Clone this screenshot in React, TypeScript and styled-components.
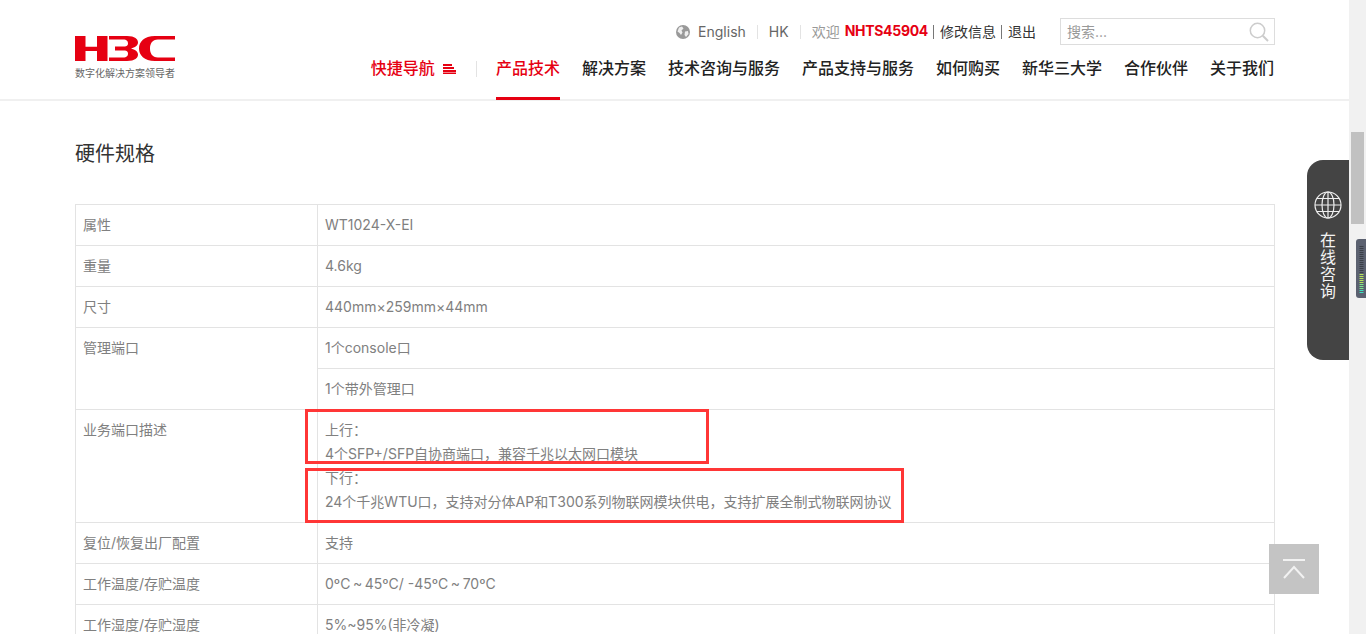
import React from "react";
import styled, { createGlobalStyle } from "styled-components";

const Global = createGlobalStyle`
  html, body { margin: 0; padding: 0; height: 100%; overflow: hidden; background: #fff; }
  body { font-family: "Inter", "Noto Sans CJK SC", sans-serif; }
`;

const Page = styled.div`
  position: relative;
  display: flex;
  width: 1366px;
  height: 634px;
  overflow: hidden;
`;
const Main = styled.div`
  flex: 1;
  min-width: 0;
  display: flex;
  flex-direction: column;
`;
const ScrollTrack = styled.div`
  width: 17px;
  flex: none;
  background: #f1f1f1;
  padding: 132px 2px 0;
  box-sizing: border-box;
`;
const ScrollThumb = styled.div`
  height: 92px;
  background: #c1c1c1;
`;
const Header = styled.header`
  height: 101px;
  flex: none;
  box-sizing: border-box;
  border-bottom: 2px solid #f0f0f0;
  padding: 0 74px 0 75px;
  display: flex;
  justify-content: space-between;
`;
const Brand = styled.div`
  display: flex;
  flex-direction: column;
  padding-top: 36px;
  width: 100px;
`;
const Tagline = styled.div`
  font-size: 10px;
  line-height: 14px;
  margin-top: 5px;
  color: #666;
  white-space: nowrap;
`;
const HeaderRight = styled.div`
  display: flex;
  flex-direction: column;
  align-items: flex-end;
`;
const TopBar = styled.div`
  display: flex;
  align-items: center;
  height: 27px;
  margin-top: 18px;
  font-size: 14px;
  color: #555;
`;
const TopLink = styled.span`
  white-space: nowrap;
  color: #333;
  position: relative;
  top: -1px;
`;
const Lang = styled.span`
  display: flex;
  align-items: center;
  gap: 8px;
  color: #666;
  padding-right: 11px;
  border-right: 1px solid #e3e3e3;
  line-height: 14px;
  white-space: nowrap;
`;
const Region = styled(Lang)`
  padding-left: 11px;
`;
const Welcome = styled.span`
  color: #999;
  margin-left: 11px;
  position: relative;
  top: -1px;
`;
const UserName = styled.b`
  color: #e60012;
  margin-left: 5px;
  font-weight: 700;
  letter-spacing: -0.3px;
  position: relative;
  top: -1px;
`;
const Sep = styled.span`
  width: 1px;
  height: 14px;
  background: #777;
  margin: 0 6px 0 5px;
`;
const Search = styled.div`
  width: 215px;
  height: 27px;
  box-sizing: border-box;
  margin-left: 24px;
  border: 1px solid #ddd;
  display: flex;
  align-items: center;
  justify-content: space-between;
  padding: 0 5px 2px 6px;
  font-size: 14px;
  color: #999;
`;
const SearchGlyph = styled.svg`
  margin-bottom: -2px;
`;
const Nav = styled.nav`
  display: flex;
  height: 54px;
  margin: 1px 1px 0 0;
  font-size: 16px;
  font-weight: 500;
  color: #222;
`;
const NavItem = styled.div<{ $active?: boolean; $quick?: boolean; $first?: boolean }>`
  box-sizing: border-box;
  height: 54px;
  line-height: 44px;
  margin-left: ${(p) => (p.$quick ? 0 : p.$first ? 19 : 22)}px;
  white-space: nowrap;
  color: ${(p) => (p.$active || p.$quick ? "#e60012" : "#222")};
  border-bottom: 3px solid ${(p) => (p.$active ? "#e60012" : "transparent")};
  display: flex;
  align-items: flex-start;
`;
const QuickIcon = styled.svg`
  margin: 18px 20px 0 8px;
  flex: none;
`;
const NavDivider = styled.span`
  width: 1px;
  height: 16px;
  margin: 15px 0 0 0;
  background: #e3e3e3;
`;
const Content = styled.main`
  position: relative;
  flex: 1;
  min-height: 0;
  padding: 0 74px 0 75px;
`;
const Title = styled.h2`
  margin: 0;
  padding-top: 37px;
  height: 66px;
  font-size: 20px;
  line-height: 32px;
  font-weight: 400;
  color: #333;
`;
const Table = styled.table`
  width: 1200px;
  border-collapse: collapse;
  table-layout: fixed;
  font-size: 14px;
  color: #808080;
`;
const Cell = styled.td`
  border: 1px solid #e3e3e3;
  padding: 8px 7px;
  line-height: 24px;
  height: 24px;
  vertical-align: top;
`;
const NameCol = styled.col`
  width: 242px;
`;
const Annotation = styled.div<{ $top: number; $w: number; $h: number }>`
  position: absolute;
  left: 305px;
  top: ${(p) => p.$top}px;
  width: ${(p) => p.$w}px;
  height: ${(p) => p.$h}px;
  box-sizing: border-box;
  border: 3px solid #ff3636;
`;
const ChatTab = styled.div`
  position: absolute;
  left: 1307px;
  top: 160px;
  width: 42px;
  height: 200px;
  box-sizing: border-box;
  padding-top: 31px;
  background: #444;
  border-radius: 16px 0 0 16px;
  display: flex;
  flex-direction: column;
  align-items: center;
  color: #f2f2f2;
`;
const ChatText = styled.div`
  width: 16px;
  margin-top: 13px;
  font-size: 16px;
  line-height: 17px;
  text-align: center;
`;
const BackTop = styled.div`
  position: absolute;
  left: 1269px;
  top: 544px;
  width: 50px;
  height: 50px;
  background: #c4c4c4;
  display: flex;
  align-items: center;
  justify-content: center;
`;
const Meter = styled.svg`
  position: absolute;
  left: 1356px;
  top: 239px;
`;

const Logo = () => (
  <svg width="100" height="25" viewBox="0 0 100 25" fill="#e60012">
    <path d="M0 0H10.5V10.7H22V0H32.5V25H22V15H10.5V25H0Z" />
    <path d="M34 0H52C60 0 63 3 63 6.5C63 9.5 60 11.5 56 12.5C60 13.5 63 15.5 63 18.5C63 22 60 25 52 25H34V21.5H48C52 21.5 53 19.5 53 17.5C53 15 51 14.5 48 14.5H40V10.5H48C51 10.5 53 10 53 7.5C53 5.5 52 3.5 48 3.5H34Z" />
    <path d="M100 0H80C69 0 64 6 64 12.5C64 19 69 25 80 25H100V21.5H83C77 21.5 75 17 75 12.5C75 8 77 3.5 83 3.5H100Z" />
  </svg>
);

const GlobeSolid = () => (
  <svg width="14" height="14" viewBox="0 0 14 14">
    <circle cx="7" cy="7" r="7" fill="#999" />
    <path d="M3 2.5L6 1.5L7.5 3.5L5.5 5.5L6.5 7.5L5 10L3.5 8L1.5 6.5ZM9 6.5L12 6L12.5 9L10 12L8.5 10Z" fill="#eee" />
  </svg>
);

const SearchIcon = () => (
  <SearchGlyph width="20" height="20" viewBox="0 0 20 20" fill="none" stroke="#ccc" strokeWidth="1.5">
    <circle cx="8.5" cy="8.5" r="7.2" />
    <path d="M13.8 13.8L19 19" strokeWidth="2" />
  </SearchGlyph>
);

const Globe = () => (
  <svg width="28" height="28" viewBox="0 0 28 28" fill="none" stroke="#eee" strokeWidth="1.2">
    <circle cx="14" cy="14" r="13" />
    <ellipse cx="14" cy="14" rx="6" ry="13" />
    <path d="M14 1V27M1 14H27M3 7.5H25M3 20.5H25" />
  </svg>
);

const Meters = () => {
  const bars = Array.from({ length: 24 }, (_, i) => i);
  const color = (i: number) =>
    i < 14 ? "#3a3f47" : i < 19 ? "#b5e55a" : i < 22 ? "#7de88a" : "#3fe0c0";
  return (
    <Meter width="10" height="59" viewBox="0 0 10 59">
      <path d="M10 0H3Q0 0 0 3V56Q0 59 3 59H10Z" fill="#5b6170" />
      {bars.map((i) => (
        <rect key={i} x="3.5" y={7 + i * 2} width="4" height="1" fill={color(i)} />
      ))}
    </Meter>
  );
};

const rows = [
  { name: "属性", value: "WT1024-X-EI" },
  { name: "重量", value: "4.6kg" },
  { name: "尺寸", value: "440mm×259mm×44mm" },
];
const tail = [
  { name: "复位/恢复出厂配置", value: "支持" },
  { name: "工作温度/存贮温度", value: "0ºC\u2009~\u200945ºC/ -45ºC\u2009~\u200970ºC" },
  { name: "工作湿度/存贮湿度", value: "5%~95%(非冷凝)" },
];
const navItems = ["解决方案", "技术咨询与服务", "产品支持与服务", "如何购买", "新华三大学", "合作伙伴", "关于我们"];

export default function App() {
  return (
    <Page>
      <Global />
      <Main>
        <Header>
          <Brand>
            <Logo />
            <Tagline>数字化解决方案领导者</Tagline>
          </Brand>
          <HeaderRight>
            <TopBar>
              <Lang>
                <GlobeSolid />
                English
              </Lang>
              <Region>HK</Region>
              <Welcome>欢迎</Welcome>
              <UserName>NHTS45904</UserName>
              <Sep />
              <TopLink>修改信息</TopLink>
              <Sep />
              <TopLink>退出</TopLink>
              <Search>
                搜索...
                <SearchIcon />
              </Search>
            </TopBar>
            <Nav>
              <NavItem $quick>
                快捷导航
                <QuickIcon width="13" height="10" viewBox="0 0 13 10" fill="#e60012">
                  <path d="M0 0H9V2H0ZM0 3H11V5H0ZM0 6H13V8H0ZM0 8.5H13V10H0Z" />
                </QuickIcon>
              </NavItem>
              <NavDivider />
              <NavItem $active $first>产品技术</NavItem>
              {navItems.map((n) => (
                <NavItem key={n}>{n}</NavItem>
              ))}
            </Nav>
          </HeaderRight>
        </Header>
        <Content>
          <Title>硬件规格</Title>
          <Table>
            <colgroup>
              <NameCol />
              <col />
            </colgroup>
            <tbody>
              {rows.map((r) => (
                <tr key={r.name}>
                  <Cell>{r.name}</Cell>
                  <Cell>{r.value}</Cell>
                </tr>
              ))}
              <tr>
                <Cell rowSpan={2}>管理端口</Cell>
                <Cell>1个console口</Cell>
              </tr>
              <tr>
                <Cell>1个带外管理口</Cell>
              </tr>
              <tr>
                <Cell>业务端口描述</Cell>
                <Cell>
                  上行：
                  <br />
                  4个SFP+/SFP自协商端口，兼容千兆以太网口模块
                  <br />
                  下行：
                  <br />
                  24个千兆WTU口，支持对分体AP和T300系列物联网模块供电，支持扩展全制式物联网协议
                </Cell>
              </tr>
              {tail.map((r) => (
                <tr key={r.name}>
                  <Cell>{r.name}</Cell>
                  <Cell>{r.value}</Cell>
                </tr>
              ))}
            </tbody>
          </Table>
          <Annotation $top={308} $w={404} $h={55} />
          <Annotation $top={367} $w={599} $h={55} />
        </Content>
      </Main>
      <ScrollTrack>
        <ScrollThumb />
      </ScrollTrack>
      <ChatTab>
        <Globe />
        <ChatText>在线咨询</ChatText>
      </ChatTab>
      <BackTop>
        <svg width="24" height="20" viewBox="0 0 24 20" fill="none" stroke="#f2f2f2" strokeWidth="2">
          <path d="M1 1H23M2 19L12 8L22 19" />
        </svg>
      </BackTop>
      <Meters />
    </Page>
  );
}
